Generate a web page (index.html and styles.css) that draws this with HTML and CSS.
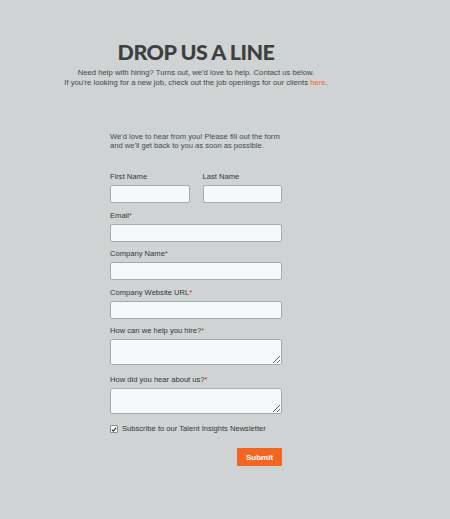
FILE: index.html
```html
<!DOCTYPE html>
<html>
<head>
<meta charset="utf-8">
<link rel="stylesheet" href="styles.css">
</head>
<body>
<div class="page">
  <header class="hero">
    <h1 class="title">DROP US A LINE</h1>
    <p class="lead">Need help with hiring? Turns out, we'd love to help. Contact us below.<br>If you're looking for a new job, check out the job openings for our clients <a class="link" href="#">here</a>.</p>
  </header>
  <form class="form">
    <p class="intro">We'd love to hear from you! Please fill out the form<br>and we'll get back to you as soon as possible.</p>
    <div class="row">
      <div class="field half">
        <label class="label">First Name</label>
        <input class="input" type="text">
      </div>
      <div class="field half">
        <label class="label">Last Name</label>
        <input class="input" type="text">
      </div>
    </div>
    <div class="field">
      <label class="label">Email<span class="req">*</span></label>
      <input class="input" type="text">
    </div>
    <div class="field">
      <label class="label">Company Name<span class="req">*</span></label>
      <input class="input" type="text">
    </div>
    <div class="field">
      <label class="label">Company Website URL<span class="req">*</span></label>
      <input class="input" type="text">
    </div>
    <div class="field">
      <label class="label">How can we help you hire?<span class="req">*</span></label>
      <textarea class="input area"></textarea>
    </div>
    <div class="field">
      <label class="label">How did you hear about us?<span class="req">*</span></label>
      <textarea class="input area"></textarea>
    </div>
    <label class="check">
      <span class="box"><svg width="7" height="7" viewBox="0 0 7 7"><path d="M1 3.6 L2.8 5.4 L6 1.4" fill="none" stroke="#333" stroke-width="1.3"/></svg></span>
      <span>Subscribe to our Talent Insights Newsletter</span>
    </label>
    <div class="actions">
      <button class="submit" type="button">Submit</button>
    </div>
  </form>
</div>
</body>
</html>
```
FILE: styles.css
```css
html, body {
  margin: 0;
  padding: 0;
  background: #cfd3d3;
}
.page {
  width: 450px;
  min-height: 519px;
  font-family: "Liberation Sans", Arial, sans-serif;
  color: #3a3d3f;
}
.hero {
  width: 392px;
  padding-top: 39px;
  text-align: center;
}
.title {
  margin: 0;
  font-family: Lato, sans-serif;
  font-weight: 900;
  font-size: 21.5px;
  line-height: 26px;
  letter-spacing: -0.5px;
  color: #3d4040;
}
.lead {
  margin: 3px 0 0;
  font-size: 7.7px;
  line-height: 10px;
  color: #444748;
}
.link {
  color: #f26522;
  text-decoration: none;
}
.form {
  width: 172px;
  margin: 44px 0 0 110px;
}
.intro {
  margin: 0 0 22px;
  font-size: 7.6px;
  line-height: 9px;
  color: #3e4a55;
  white-space: nowrap;
}
.row {
  display: flex;
  gap: 13px;
}
.field {
  display: flex;
  flex-direction: column;
  margin-bottom: 7.5px;
}
.half {
  flex: 1;
}
.label {
  font-size: 7.6px;
  line-height: 10px;
  margin-bottom: 3px;
  color: #333638;
}
.req {
  color: #e0272d;
}
.input {
  box-sizing: border-box;
  width: 100%;
  height: 18px;
  margin: 0;
  padding: 2px 4px;
  border: 1px solid #a7aaac;
  border-radius: 2px;
  background: #f7f8fa;
  font-family: inherit;
  font-size: 8px;
}
.area {
  height: 26px;
  resize: vertical;
  display: block;
}
.field:has(.area) {
  margin-bottom: 10px;
}
.check {
  display: flex;
  align-items: center;
  gap: 4px;
  margin-top: 0;
  font-size: 7.6px;
  line-height: 10px;
  color: #333638;
}
.box {
  width: 8px;
  height: 8px;
  box-sizing: border-box;
  border: 1px solid #8a8d90;
  border-radius: 1px;
  background: #f7f8fa;
  display: flex;
  align-items: center;
  justify-content: center;
}
.actions {
  display: flex;
  justify-content: flex-end;
  margin-top: 14px;
}
.submit {
  width: 45px;
  height: 18px;
  border: none;
  border-radius: 1px;
  background: #f26522;
  color: #fff;
  font-family: "Liberation Sans", Arial, sans-serif;
  font-weight: bold;
  font-size: 8px;
  padding: 0;
}
```
